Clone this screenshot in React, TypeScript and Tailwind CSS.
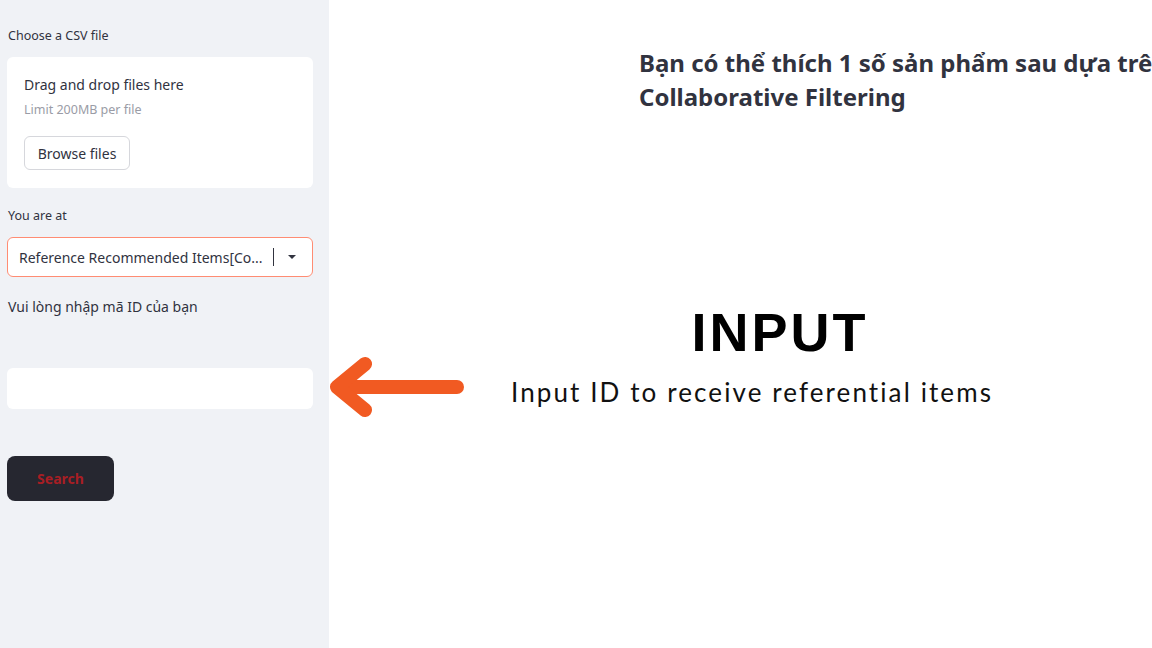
import React from "react";

const sans = { fontFamily: '"Noto Sans", "Open Sans", sans-serif' };

function LeftArrow() {
  return (
    <svg width="140" height="64" viewBox="0 0 140 64" className="absolute left-[327px] top-[355px]">
      <g stroke="#f15a22" strokeWidth="14" strokeLinecap="round" strokeLinejoin="round" fill="none">
        <path d="M130 32 H12" />
        <path d="M38 9 L10 32 L38 55" />
      </g>
    </svg>
  );
}

export default function App() {
  return (
    <div className="relative flex w-[1152px] h-[648px] overflow-hidden bg-white" style={sans}>
      <aside className="w-[329px] shrink-0 bg-[#f0f2f6] px-[7px] pt-[28px] text-[#31333f]">
        <p className="text-[12.5px] leading-[16px] pl-[1px]">Choose a CSV file</p>
        <div className="mt-[13px] h-[131px] w-[306px] rounded-md bg-white pl-[17px] pt-[18px]">
          <p className="text-[14px] leading-[20px]">Drag and drop files here</p>
          <p className="mt-[7px] text-[12.5px] leading-[16px] text-[#9a9ca6]">Limit 200MB per file</p>
          <button className="mt-[18px] h-[34px] w-[106px] rounded-md border border-[#d6d7dc] bg-white text-[14px]">
            Browse files
          </button>
        </div>
        <p className="mt-[20px] text-[12.5px] leading-[16px] pl-[1px]">You are at</p>
        <div className="mt-[13px] flex h-[40px] w-[306px] items-center rounded-md border border-[#ff8c73] bg-white pl-[11px] pr-[14px]">
          <span className="flex-1 whitespace-nowrap text-[14px]">Reference Recommended Items[Co...</span>
          <span className="mx-[9px] h-[18px] w-px shrink-0 bg-[#31333f]" />
          <svg width="12" height="8" viewBox="0 0 12 8" className="ml-[3px] shrink-0">
            <path d="M2 2 L6 6 L10 2 Z" fill="#31333f" />
          </svg>
        </div>
        <p className="mt-[20px] text-[14px] leading-[20px] pl-[1px]">Vui lòng nhập mã ID của bạn</p>
        <div className="mt-[51px] h-[41px] w-[306px] rounded-md bg-white" />
        <button className="mt-[47px] h-[45px] w-[107px] rounded-lg bg-[#262730] text-[14px] font-bold text-[#a81e24]">
          Search
        </button>
      </aside>
      <main className="flex-1 pl-[310px] pt-[46px]">
        <h1 className="whitespace-nowrap text-[24px] font-bold leading-[34px] text-[#31333f]">
          Bạn có thể thích 1 số sản phẩm sau dựa trên
          <br />
          Collaborative Filtering
        </h1>
      </main>
      <LeftArrow />
      <div className="absolute left-[480px] top-[300px] flex w-[600px] flex-col items-center">
        <p className="text-[54px] font-bold leading-[64px] tracking-[3px] text-black" style={{ fontFamily: '"Liberation Sans", Arial, sans-serif' }}>
          INPUT
        </p>
        <p className="mr-[56px] mt-[12px] whitespace-nowrap text-[26px] leading-[32px] tracking-[2.1px] text-[#111]" style={{ fontFamily: 'Lato, sans-serif' }}>
          Input ID to receive referential items
        </p>
      </div>
    </div>
  );
}
